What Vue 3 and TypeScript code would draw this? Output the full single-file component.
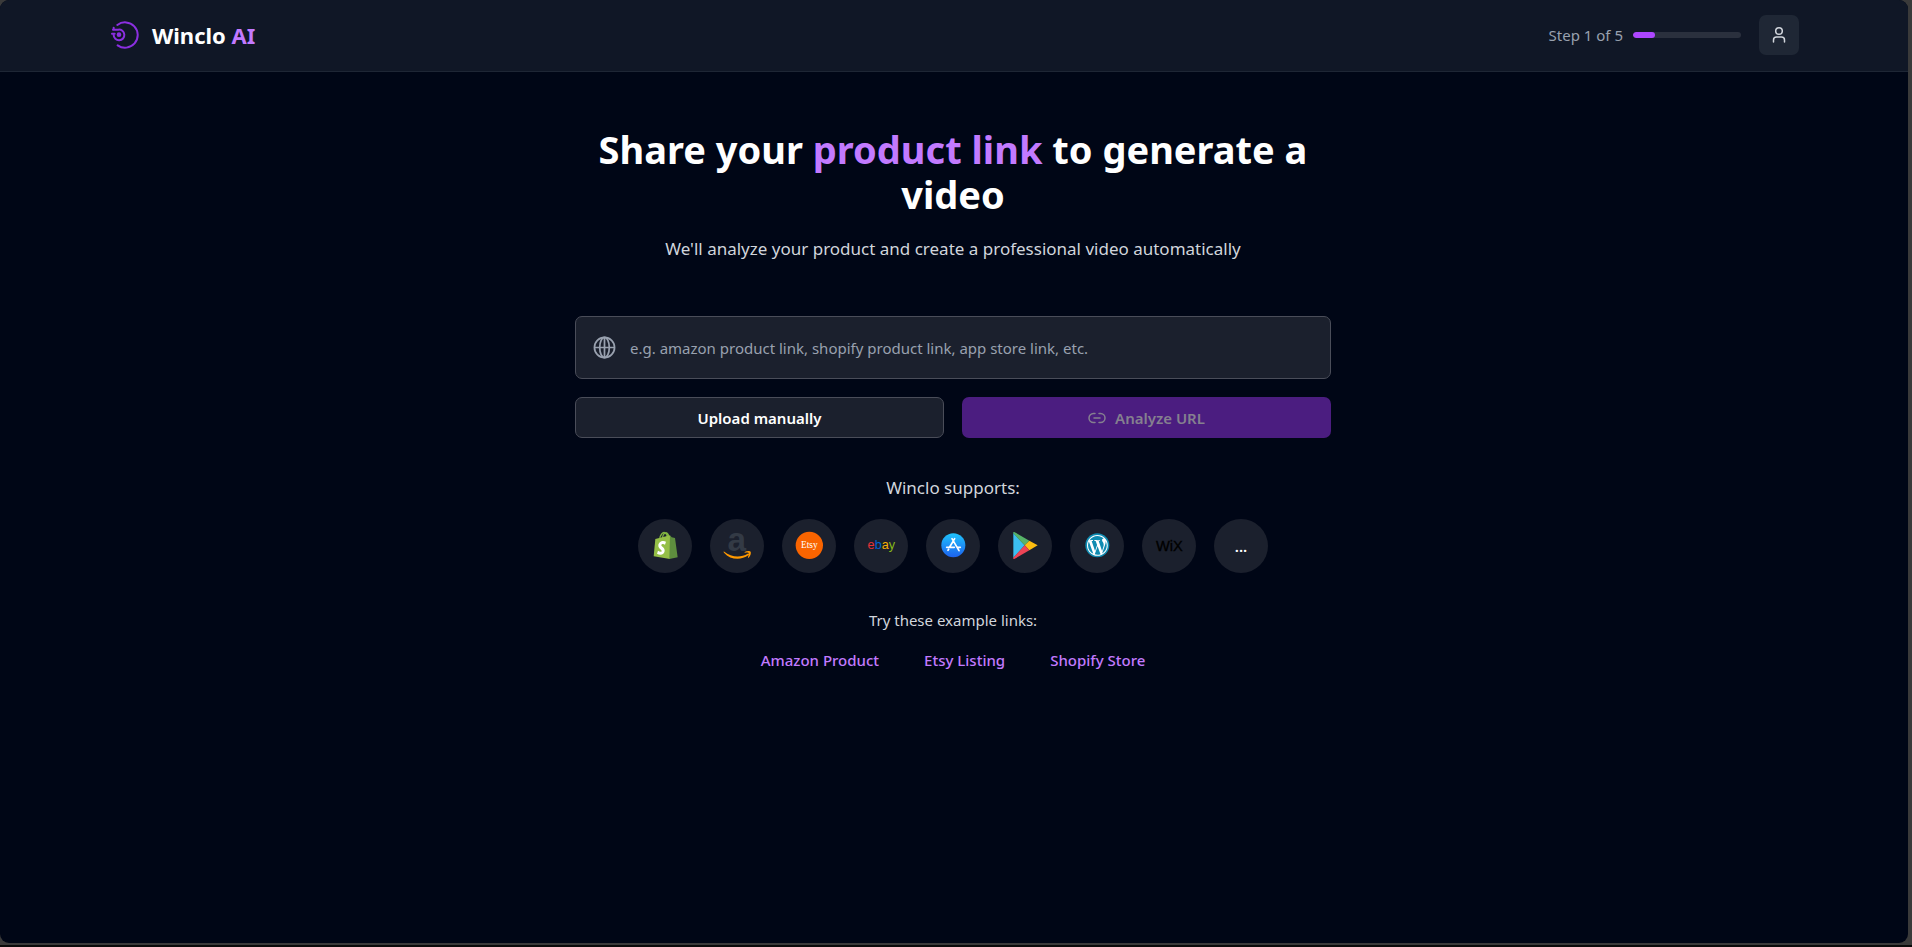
<script setup lang="ts">
import { ref, computed } from 'vue'

interface ExampleLink {
  label: string
  url: string
}

const step = ref<number>(1)
const totalSteps = 5
const progress = computed<string>(() => `${(step.value / totalSteps) * 100}%`)

const productUrl = ref<string>('')
const canAnalyze = computed<boolean>(() => productUrl.value.trim().length > 0)

const examples: ExampleLink[] = [
  { label: 'Amazon Product', url: '#amazon' },
  { label: 'Etsy Listing', url: '#etsy' },
  { label: 'Shopify Store', url: '#shopify' },
]
</script>

<template>
  <div class="frame">
    <div class="page">
      <header class="topbar">
        <div class="topbar-inner">
          <div class="brand">
            <svg class="brand-mark" viewBox="0 0 84 84" aria-hidden="true">
              <g fill="none" stroke="#8b2fe0" stroke-width="6" stroke-linecap="round">
                <path d="M19 12 A38 38 0 1 1 20 73" />
                <path d="M6 26 H22 A16 16 0 1 1 8 42" />
                <path d="M3 38 H11" />
                <path d="M8 20 V25" />
              </g>
              <circle cx="24" cy="41" r="7" fill="#8b2fe0" />
            </svg>
            <span class="brand-name">Winclo <span class="accent">AI</span></span>
          </div>
          <div class="status">
            <span id="step-label" class="step-label">Step {{ step }} of {{ totalSteps }}</span>
            <div class="track" role="progressbar" aria-labelledby="step-label" :aria-valuenow="step" :aria-valuemax="totalSteps">
              <div class="fill" :style="{ width: progress }"></div>
            </div>
            <button class="user" type="button" aria-label="Account">
              <svg viewBox="0 0 18 18" aria-hidden="true">
                <g fill="none" stroke="#d1d5dc" stroke-width="1.5" stroke-linecap="round">
                  <circle cx="9" cy="5" r="3.3" />
                  <path d="M3.5 16 V14 A3 3 0 0 1 6.500 11 H11.500 A3 3 0 0 1 14.500 14 V16" />
                </g>
              </svg>
            </button>
          </div>
        </div>
      </header>

      <main class="main">
        <section class="column">
          <h1 class="title">Share your <span class="accent">product link</span> to generate a video</h1>
          <p class="subtitle">We'll analyze your product and create a professional video automatically</p>

          <form class="form" @submit.prevent>
            <label class="url-box">
              <svg class="globe" viewBox="0 0 24 24" aria-hidden="true">
                <g fill="none" stroke="#99a1af" stroke-width="1.8">
                  <circle cx="12" cy="12" r="10.500" />
                  <ellipse cx="12" cy="12" rx="5" ry="10.500" />
                  <path d="M1.500 12 H22.500 M12 1.500 V22.500" />
                </g>
              </svg>
              <input
                v-model="productUrl"
                class="url-input"
                type="text"
                aria-label="Product link"
                placeholder="e.g. amazon product link, shopify product link, app store link, etc."
              />
            </label>
            <div class="actions">
              <button class="btn btn-outline" type="button">Upload manually</button>
              <button class="btn btn-primary" type="submit" :disabled="!canAnalyze">
                <svg class="link-icon" viewBox="0 0 18 18" aria-hidden="true">
                  <path
                    d="M7 4.500 H5.500 A4.500 4.500 0 0 0 5.500 13.500 H7 M11 4.500 H12.500 A4.500 4.500 0 0 1 12.500 13.500 H11 M6 9 H12"
                    fill="none"
                    stroke="currentColor"
                    stroke-width="1.5"
                    stroke-linecap="round"
                  />
                </svg>
                Analyze URL
              </button>
            </div>
          </form>

          <h2 class="supports">Winclo supports:</h2>
          <ul class="platforms">
            <li class="platform">
              <svg viewBox="0 0 162 162" role="img" aria-label="Shopify">
                <path d="M65 61 C66 47 75 39 80 41 C86 43 88 50 88 55 M73 58 C74 46 82 38 87 42 C91 45 92 50 92 54" fill="none" stroke="#82b541" stroke-width="4" />
                <path d="M52 60 L96 49 L96 120 L47 112 Z" fill="#95bf47" />
                <path d="M96 49 L101 55 L111 57 L119 115 L94 120 Z" fill="#5e8e3e" />
                <path d="M84 68 L81 77 C76 74 70 75 70 79 C70 84 81 85 80 96 C79 106 68 111 57 104 L60 95 C65 99 71 100 71 96 C71 91 61 89 61 80 C61 69 73 63 84 68 Z" fill="#fff" />
              </svg>
            </li>
            <li class="platform">
              <svg viewBox="0 0 162 162" role="img" aria-label="Amazon">
                <text x="80" y="97" text-anchor="middle" font-family="Liberation Sans, sans-serif" font-weight="700" font-size="100" fill="#333a45">a</text>
                <path d="M43 98 C62 114 92 117 113 104 C117 102 119 106 115 109 C93 125 61 123 42 101 C40 98 41 97 43 98 Z" fill="#ff9900" />
                <path d="M104 99 C110 95 120 95 122 98 C124 102 121 111 116 116 C114 117 113 116 114 114 C116 109 118 104 116 102 C114 100 109 101 105 101 C103 101 103 100 104 99 Z" fill="#ff9900" />
              </svg>
            </li>
            <li class="platform">
              <svg viewBox="0 0 162 162" role="img" aria-label="Etsy">
                <circle cx="82" cy="79" r="41" fill="#f96400" />
                <text x="82" y="87" text-anchor="middle" font-family="Liberation Serif, serif" font-size="28" fill="#fff">Etsy</text>
              </svg>
            </li>
            <li class="platform">
              <svg viewBox="0 0 162 162" role="img" aria-label="eBay">
                <text x="82" y="91" text-anchor="middle" font-family="Liberation Sans, sans-serif" font-size="38"><tspan fill="#e53238">e</tspan><tspan fill="#0064d2">b</tspan><tspan fill="#f5af02">a</tspan><tspan fill="#86b817">y</tspan></text>
              </svg>
            </li>
            <li class="platform">
              <svg viewBox="0 0 162 162" role="img" aria-label="App Store">
                <defs>
                  <linearGradient id="store-blue" x1="0" y1="0" x2="0" y2="1">
                    <stop offset="0" stop-color="#1fc3fb" />
                    <stop offset="1" stop-color="#1d62ef" />
                  </linearGradient>
                </defs>
                <circle cx="82" cy="79" r="36" fill="url(#store-blue)" />
                <g fill="none" stroke="#fff" stroke-width="5" stroke-linecap="round">
                  <path d="M86 59 L71 84 M78 59 L99 95 M62 85 H85 M95 85 H103 M68 91 L66 94" />
                </g>
              </svg>
            </li>
            <li class="platform">
              <svg viewBox="0 0 162 162" role="img" aria-label="Google Play">
                <path d="M46 42 L80 79 L46 117 Z" fill="#3bbff0" />
                <path d="M46 39 L49 39 L94 65 L80 79 L46 43 Z" fill="#57b368" />
                <path d="M94 65 L119 79 L94 94 L80 79 Z" fill="#fdbd10" />
                <path d="M80 79 L94 94 L49 120 L46 120 L46 116 Z" fill="#ee4456" />
              </svg>
            </li>
            <li class="platform">
              <svg viewBox="0 0 162 162" role="img" aria-label="WordPress">
                <circle cx="82" cy="79" r="36" fill="#0f8bb1" />
                <path
                  transform="translate(51 48) scale(2.6)"
                  fill="#fff"
                  d="M21.469 6.825c.84 1.537 1.318 3.3 1.318 5.175 0 3.979-2.156 7.456-5.363 9.325l3.295-9.527c.615-1.54.82-2.771.82-3.864 0-.405-.026-.78-.07-1.11m-7.981.105c.647-.03 1.232-.105 1.232-.105.582-.075.514-.93-.067-.899 0 0-1.755.135-2.88.135-1.064 0-2.85-.15-2.85-.15-.585-.03-.661.855-.075.885 0 0 .54.061 1.125.09l1.68 4.605-2.37 7.08L5.354 6.9c.649-.03 1.234-.1 1.234-.1.585-.075.516-.93-.065-.896 0 0-1.746.138-2.874.138-.2 0-.438-.008-.69-.015C4.911 3.15 8.235 1.215 12 1.215c2.809 0 5.365 1.072 7.286 2.833-.046-.003-.091-.009-.141-.009-1.06 0-1.812.923-1.812 1.914 0 .89.513 1.643 1.06 2.531.411.72.89 1.643.89 2.977 0 .915-.354 1.994-.821 3.479l-1.075 3.585-3.9-11.61.001.014zM12 22.784c-1.059 0-2.081-.153-3.048-.437l3.237-9.406 3.315 9.087c.024.053.05.101.078.149-1.12.393-2.325.609-3.582.609M1.211 12c0-1.564.336-3.05.935-4.39L7.29 21.709C3.694 19.96 1.212 16.271 1.211 12M12 0C5.385 0 0 5.385 0 12s5.385 12 12 12 12-5.385 12-12S18.615 0 12 0"
                />
              </svg>
            </li>
            <li class="platform">
              <svg viewBox="0 0 162 162" role="img" aria-label="Wix">
                <text x="82" y="95" text-anchor="middle" font-family="Liberation Sans, sans-serif" font-size="44" fill="#000" stroke="#000" stroke-width="1">WiX</text>
              </svg>
            </li>
            <li class="platform more">...</li>
          </ul>

          <p class="try">Try these example links:</p>
          <nav class="examples" aria-label="Example links">
            <a v-for="item in examples" :key="item.label" :href="item.url" class="example">{{ item.label }}</a>
          </nav>
        </section>
      </main>
    </div>
  </div>
</template>

<style>
body {
  margin: 0;
  background: #3a3a3a;
}
</style>

<style scoped>
.frame {
  box-sizing: border-box;
  display: flex;
  min-height: 100vh;
  padding: 0 4px 2px 0;
  border-bottom: 2px solid #0a0a0a;
  background: #3a3a3a;
  font-family: 'Noto Sans', 'Open Sans', sans-serif;
  font-size: 15px;
  line-height: 22px;
  color: #d1d5dc;
}
.page {
  flex: 1;
  min-width: 0;
  border-radius: 9px;
  overflow: hidden;
  background: #000616;
}
.accent {
  color: #c27aff;
}
.topbar {
  border-bottom: 1px solid #1e2635;
  background: #101726;
}
.topbar-inner {
  box-sizing: border-box;
  display: flex;
  align-items: center;
  justify-content: space-between;
  max-width: 1730px;
  margin: 0 auto;
  padding: 15px 20px 16px 22px;
}
.brand {
  display: flex;
  align-items: center;
  gap: 13px;
}
.brand-mark {
  width: 28px;
  height: 28px;
}
.brand-name {
  font-size: 22px;
  line-height: 28px;
  font-weight: 700;
  color: #fff;
}
.status {
  display: flex;
  align-items: center;
}
.step-label {
  margin-right: 10px;
  color: #99a1af;
}
.track {
  width: 108px;
  height: 6px;
  margin-right: 18px;
  border-radius: 3px;
  background: #2a303d;
  overflow: hidden;
}
.fill {
  height: 100%;
  border-radius: 3px;
  background: #ad46ff;
}
.user {
  display: flex;
  align-items: center;
  justify-content: center;
  width: 40px;
  height: 40px;
  padding: 0;
  border: 0;
  border-radius: 7px;
  background: #1f2735;
}
.user svg {
  width: 18px;
  height: 18px;
}
.main {
  padding: 55px 20px 54px 18px;
}
.column {
  max-width: 756px;
  margin: 0 auto;
  text-align: center;
}
.title {
  margin: 0 0 18px;
  font-size: 38px;
  line-height: 45px;
  font-weight: 700;
  color: #fff;
}
.subtitle {
  margin: 0 0 54px;
  font-size: 17px;
  line-height: 27px;
}
.form {
  display: flex;
  flex-direction: column;
  gap: 18px;
}
.url-box {
  display: flex;
  align-items: center;
  gap: 14px;
  padding: 0 17px;
  border: 1px solid #4a4d59;
  border-radius: 7px;
  background: #1b202d;
}
.globe {
  flex: none;
  width: 23px;
  height: 23px;
}
.url-input {
  flex: 1;
  min-width: 0;
  height: 61px;
  padding: 0;
  border: 0;
  outline: 0;
  background: transparent;
  font: inherit;
  color: #fff;
}
.url-input::placeholder {
  color: #99a1af;
  opacity: 1;
}
.actions {
  display: grid;
  grid-template-columns: 1fr 1fr;
  gap: 18px;
}
.btn {
  box-sizing: border-box;
  display: flex;
  align-items: center;
  justify-content: center;
  gap: 9px;
  height: 41px;
  padding: 0 18px;
  border: 0;
  border-radius: 7px;
  font: inherit;
  font-weight: 600;
}
.btn-outline {
  border: 1px solid #4a4d59;
  background: #1b202d;
  color: #fff;
}
.btn-primary {
  background: #4b1d80;
  color: #85808f;
}
.link-icon {
  width: 18px;
  height: 18px;
}
.supports {
  margin: 36px 0 18px;
  font-size: 17px;
  line-height: 27px;
  font-weight: 400;
}
.platforms {
  display: flex;
  flex-wrap: wrap;
  justify-content: center;
  gap: 18px;
  margin: 0;
  padding: 0;
  list-style: none;
}
.platform {
  display: flex;
  align-items: center;
  justify-content: center;
  width: 54px;
  height: 54px;
  border-radius: 50%;
  background: #1b202d;
}
.platform svg {
  width: 54px;
  height: 54px;
}
.more {
  font-weight: 600;
  color: #fff;
}
.try {
  margin: 36px 0 18px;
}
.examples {
  display: flex;
  flex-wrap: wrap;
  justify-content: center;
  gap: 18px 45px;
}
.example {
  font-weight: 500;
  color: #c27aff;
  text-decoration: none;
}
</style>
